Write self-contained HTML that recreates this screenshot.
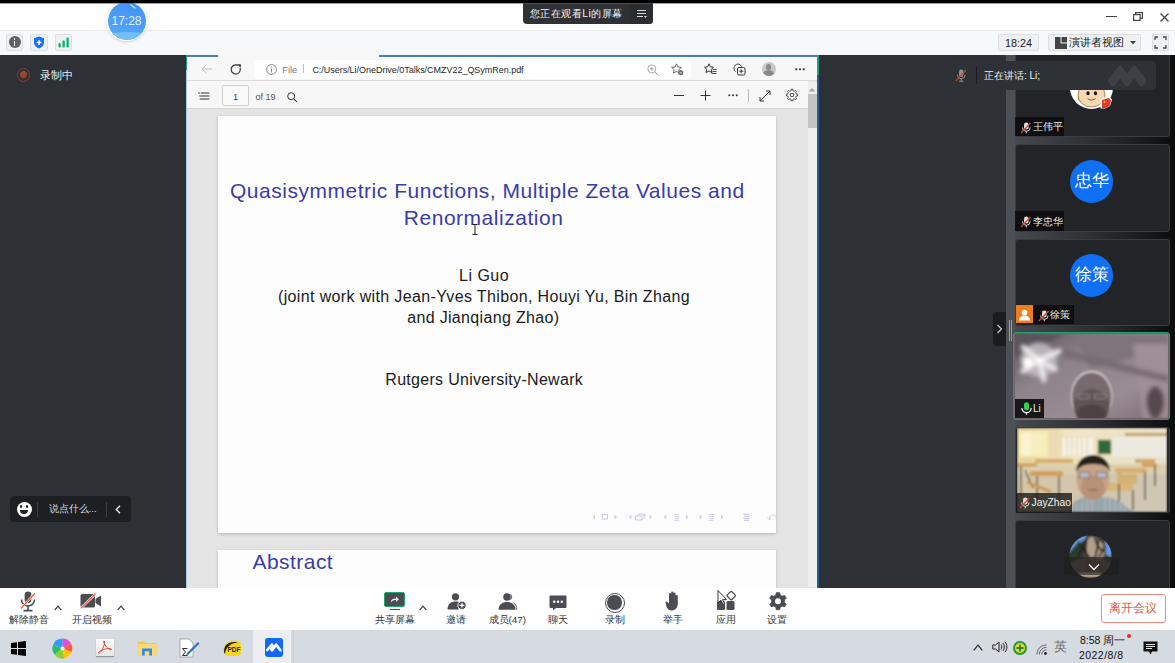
<!DOCTYPE html>
<html><head><meta charset="utf-8">
<style>
*{margin:0;padding:0;box-sizing:border-box}
html,body{width:1175px;height:663px;overflow:hidden;background:#2d3034;font-family:"Liberation Sans",sans-serif}
.a{position:absolute}
svg{position:absolute;overflow:visible}
#topblack{left:0;top:0;width:1175px;height:3px;background:#000}
#title{left:0;top:3px;width:1175px;height:26.5px;background:#fff}
#tool{left:0;top:29.5px;width:1175px;height:25.5px;background:#f7f8fa;border-top:1px solid #ebecee}
#bottom{left:0;top:587.5px;width:1175px;height:42px;background:#fff}
#task{left:0;top:629.5px;width:1175px;height:33.5px;background:#d6dae1}
.ibox{position:absolute;background:#eef0f2;border:1px solid #dcdee2;border-radius:2px}
.t{position:absolute;white-space:nowrap;line-height:1}
.tile{background:#232427;border:1px solid #3a3c40;border-radius:3px}
.label{background:rgba(14,14,15,.92)}
</style></head><body>
<div class="a" id="title"></div>
<div class="a" id="tool"></div>

<!-- timer circle -->
<div class="a" style="left:106px;top:0px;width:41px;height:41px;border-radius:50%;background:#fff;box-shadow:0 1px 3px rgba(0,0,0,.15)"></div>
<div class="a" style="left:107.5px;top:1.5px;width:38px;height:38px;border-radius:50%;background:linear-gradient(200deg,#3f8ff7,#5aacf6);overflow:hidden">
  <div class="a" style="left:-10px;top:30px;width:60px;height:20px;border-radius:50%;background:#7cc6f8;opacity:.8"></div>
</div>
<div class="t" style="left:111.5px;top:14.5px;font-size:12px;color:#e4efff;letter-spacing:0">17:28</div>
<div class="a" style="left:130px;top:6px;width:6px;height:1px;background:#cfe6ff;transform:rotate(35deg)"></div>

<!-- pill -->
<div class="a" style="left:523px;top:3px;width:130px;height:20.5px;background:#2f3135;border-radius:0 0 4px 4px"></div>
<div class="a" style="left:629px;top:3px;width:24px;height:20.5px;background:#2b2d31;border-radius:0 0 4px 0"></div>
<div class="t" style="left:530px;top:8.8px;font-size:10.4px;letter-spacing:0.45px;color:#f2f2f2">您正在观看Li的屏幕</div>
<svg style="left:636px;top:9px" width="12" height="10" viewBox="0 0 12 10"><path d="M1 1.5h9M1 4.5h9M1 7.5h6" stroke="#ddd" stroke-width="1.2"/><path d="M8 7l3 0-1.5 2z" fill="#ddd"/></svg>

<!-- window controls -->
<div class="a" style="left:1106px;top:16px;width:11px;height:1.2px;background:#444"></div>
<svg style="left:1133px;top:12px" width="10" height="9" viewBox="0 0 10 9"><rect x="0.6" y="2.6" width="6.5" height="5.8" fill="none" stroke="#444" stroke-width="1.2"/><path d="M2.6 2.6V0.6h6.8v5.8H7.1" fill="none" stroke="#444" stroke-width="1.2"/></svg>
<svg style="left:1160px;top:12.5px" width="9" height="9" viewBox="0 0 9 9"><path d="M0.5 0.5l8 8M8.5 0.5l-8 8" stroke="#444" stroke-width="1.3"/></svg>

<!-- toolbar icons left -->
<div class="ibox" style="left:6px;top:34px;width:17px;height:16.5px"></div>
<div class="a" style="left:8.5px;top:36px;width:12px;height:12px;border-radius:50%;background:#5f6165"></div>
<div class="a" style="left:13.7px;top:38px;width:1.8px;height:1.8px;background:#fff;border-radius:1px"></div>
<div class="a" style="left:13.7px;top:40.5px;width:1.8px;height:5px;background:#fff"></div>
<div class="ibox" style="left:30px;top:34px;width:17.5px;height:16.5px"></div>
<svg style="left:33px;top:36px" width="12" height="13" viewBox="0 0 12 13"><path d="M6 0.5L11 2.3V6.5C11 9.5 8.8 11.5 6 12.5 3.2 11.5 1 9.5 1 6.5V2.3Z" fill="#1772f5"/><path d="M6 4.3v4.6M3.7 6.6h4.6" stroke="#fff" stroke-width="1.5"/></svg>
<div class="ibox" style="left:55px;top:34px;width:17px;height:16.5px"></div>
<svg style="left:57px;top:37px" width="13" height="11" viewBox="0 0 13 11"><rect x="1.5" y="6" width="2.3" height="4.5" rx="1" fill="#0bb56a"/><rect x="5.5" y="3.5" width="2.3" height="7" rx="0.8" fill="#0bb56a"/><rect x="9.5" y="0.6" width="2.3" height="9.9" rx="0.8" fill="#0bb56a"/></svg>

<!-- toolbar right -->
<div class="ibox" style="left:998px;top:34.3px;width:40.5px;height:16.4px"></div>
<div class="t" style="left:1005px;top:37.5px;font-size:10.8px;color:#222">18:24</div>
<div class="ibox" style="left:1048.3px;top:34.3px;width:93.2px;height:16.4px"></div>
<svg style="left:1055px;top:36.5px" width="12" height="12" viewBox="0 0 12 12"><path d="M0 0h5.5v6.5H12V12H0z" fill="#444"/><rect x="6.5" y="0" width="5.5" height="5.5" fill="#444"/></svg>
<div class="t" style="left:1069px;top:37px;font-size:10.6px;color:#222">演讲者视图</div>
<svg style="left:1129.5px;top:40.5px" width="6" height="4" viewBox="0 0 6 4"><path d="M0 0h6L3 3.5z" fill="#444"/></svg>
<div class="ibox" style="left:1152.2px;top:34.3px;width:16.5px;height:16.4px"></div>
<svg style="left:1154px;top:36px" width="13" height="13" viewBox="0 0 13 13"><path d="M1 4V1h3M9 1h3v3M12 9v3H9M4 12H1V9" fill="none" stroke="#444" stroke-width="1.3"/></svg>


<!-- recording -->
<div class="a" style="left:16.5px;top:68px;width:13.5px;height:13.5px;border-radius:50%;border:1.3px solid #8a3b30"></div>
<div class="a" style="left:19.7px;top:71.3px;width:7px;height:7px;border-radius:50%;background:#a0402f"></div>
<div class="t" style="left:40px;top:70px;font-size:10.5px;color:#eee">录制中</div>

<!-- PDF window -->
<div class="a" id="pdfwin" style="left:185.8px;top:55px;width:633px;height:532.5px;background:#e4e4e4;overflow:hidden">
  <div class="a" style="left:0;top:0;width:1.6px;height:532.5px;background:#a9cbe6"></div>
  <div class="a" style="left:0;top:0;width:1.6px;height:15px;background:#1b9a8a"></div>
  <div class="a" style="left:631.2px;top:0;width:1.8px;height:532.5px;background:#255d9a"></div>
  <div class="a" style="left:631px;top:0;width:2px;height:20px;background:#1f9c8a"></div>
  <!-- address row -->
  <div class="a" style="left:1.6px;top:0;width:629.4px;height:26.3px;background:#f7f7f7;border-bottom:1px solid #dcdcdc"></div>
  <div class="a" style="left:1.6px;top:0;width:31px;height:1.5px;background:#4a7db5"></div>
  <div class="a" style="left:193px;top:0;width:438px;height:1.5px;background:#4a7db5"></div>
  <div class="a" style="left:68px;top:5px;width:437px;height:19px;background:#fff;border-radius:3px"></div>
  <!-- PDF toolbar row -->
  <div class="a" style="left:1.6px;top:26.3px;width:620.2px;height:27.7px;background:#f7f7f7;border-bottom:1px solid #d6d6d6"></div>
  <div class="a" style="left:36.6px;top:30px;width:26.2px;height:20.7px;background:#fafafa;border:1px solid #cfcfcf;border-radius:2px"></div>
  <!-- scrollbar -->
  <div class="a" style="left:621.8px;top:27.3px;width:9.6px;height:505px;background:#eeeeee"></div>
  <div class="a" style="left:621.8px;top:38.6px;width:9.4px;height:34.5px;background:#c4c4c4"></div>
  <!-- pages -->
  <div class="a" style="left:32.2px;top:60.5px;width:558px;height:417.8px;background:#fdfdfd;box-shadow:0 1px 3px rgba(0,0,0,.22)"></div>
  <div class="a" style="left:32.2px;top:494.5px;width:558px;height:60px;background:#fdfdfd;box-shadow:0 1px 3px rgba(0,0,0,.2)"></div>

  <!-- address icons -->
  <svg style="left:15px;top:8.5px" width="12" height="10" viewBox="0 0 12 10"><path d="M11 5H1.2M5.5 0.8L1.2 5l4.3 4.2" fill="none" stroke="#bdbdbd" stroke-width="1"/></svg>
  <svg style="left:44px;top:9px" width="12" height="11" viewBox="0 0 12 11"><path d="M10.2 4.2A4.6 4.6 0 1 1 8.3 1.6" fill="none" stroke="#333" stroke-width="1.2"/><path d="M7.2 0.2h3.6v3.6z" fill="#333"/></svg>
  <svg style="left:80px;top:8.8px" width="11" height="11" viewBox="0 0 11 11"><circle cx="5.5" cy="5.5" r="4.9" fill="none" stroke="#7a7a7a" stroke-width="0.9"/><path d="M5.5 4.6v3.8" stroke="#7a7a7a" stroke-width="0.9"/><circle cx="5.5" cy="3" r="0.6" fill="#7a7a7a"/></svg>
  <div class="t" style="left:96.5px;top:10.5px;font-size:9.3px;color:#7a7a7a">File</div>
  <div class="a" style="left:117.5px;top:9px;width:1px;height:9px;background:#bdbdbd"></div>
  <div class="t" style="left:126.6px;top:10.5px;font-size:9px;color:#262626;letter-spacing:-0.03px">C:/Users/Li/OneDrive/0Talks/CMZV22_QSymRen.pdf</div>
  <svg style="left:461px;top:8.5px" width="12" height="12" viewBox="0 0 12 12"><circle cx="4.8" cy="4.8" r="4" fill="none" stroke="#9a9a9a" stroke-width="0.9"/><path d="M7.8 7.8l3.5 3.5M4.8 3v3.6M3 4.8h3.6" stroke="#9a9a9a" stroke-width="0.9"/></svg>
  <svg style="left:485px;top:8px" width="13" height="13" viewBox="0 0 13 13"><path d="M5.5 0.8l1.5 3.2 3.4.4-2.5 2.3.7 3.4-3.1-1.7-3 1.7.6-3.4L0.6 4.4 4 4z" fill="none" stroke="#555" stroke-width="0.9"/><circle cx="9.8" cy="9.8" r="2.5" fill="#666"/><path d="M8.6 9.8h2.4" stroke="#fff" stroke-width="0.8"/></svg>
  <svg style="left:518px;top:8px" width="13" height="12" viewBox="0 0 13 12"><path d="M5 0.8l1.4 3 3.2.4-2.4 2.2.7 3.2-2.9-1.6-2.9 1.6.7-3.2L0.5 4.2 3.7 3.8z" fill="none" stroke="#333" stroke-width="1"/><path d="M8.5 6.5h4M8.5 8.5h4M7.5 10.5h5" stroke="#333" stroke-width="0.9"/></svg>
  <svg style="left:547px;top:8px" width="13" height="13" viewBox="0 0 13 13"><path d="M2.5 8.5C1 7.5 0.6 5 1.4 3.4 2.2 1.6 4 .8 5.8 1.2 7.6 1.6 8.2 3 8.5 4" fill="none" stroke="#333" stroke-width="1"/><rect x="4.5" y="4.5" width="7.5" height="7.5" rx="1.5" fill="none" stroke="#333" stroke-width="1"/><path d="M8.2 6.3v4M6.3 8.2h4" stroke="#333" stroke-width="1"/></svg>
  <div class="a" style="left:576px;top:6.8px;width:14px;height:14px;border-radius:50%;background:#c9c9c9;overflow:hidden">
    <div class="a" style="left:4.3px;top:2.5px;width:5.4px;height:5.4px;border-radius:50%;background:#8a8a8a"></div>
    <div class="a" style="left:1.5px;top:8.6px;width:11px;height:8px;border-radius:50%;background:#8a8a8a"></div>
  </div>
  <svg style="left:609px;top:13px" width="10" height="3" viewBox="0 0 10 3"><circle cx="1.3" cy="1.3" r="1.1" fill="#333"/><circle cx="5" cy="1.3" r="1.1" fill="#333"/><circle cx="8.7" cy="1.3" r="1.1" fill="#333"/></svg>
  <!-- pdf toolbar icons -->
  <svg style="left:12.5px;top:37px" width="12" height="8" viewBox="0 0 12 8"><circle cx="1" cy="1" r="0.8" fill="#333"/><path d="M2.8 1h8.5M1 4h10.3M1.5 7h9.8" stroke="#333" stroke-width="1"/><path d="M1 4h1.2M1 7h1.2" stroke="#fff" stroke-width="0.6"/></svg>
  <div class="t" style="left:47.5px;top:38px;font-size:8.5px;color:#333">1</div>
  <div class="t" style="left:69.8px;top:37.8px;font-size:9px;color:#555">of 19</div>
  <svg style="left:101px;top:36.5px" width="11" height="10" viewBox="0 0 11 10"><circle cx="4.2" cy="4.2" r="3.5" fill="none" stroke="#333" stroke-width="1"/><path d="M6.8 6.8l3 3" stroke="#333" stroke-width="1.1"/></svg>
  <div class="a" style="left:488.5px;top:40px;width:10px;height:1px;background:#333"></div>
  <svg style="left:514px;top:35px" width="11" height="11" viewBox="0 0 11 11"><path d="M5.5 0.5v10M0.5 5.5h10" stroke="#333" stroke-width="1"/></svg>
  <svg style="left:542px;top:39px" width="10" height="3" viewBox="0 0 10 3"><circle cx="1.3" cy="1.3" r="1" fill="#333"/><circle cx="5" cy="1.3" r="1" fill="#333"/><circle cx="8.7" cy="1.3" r="1" fill="#333"/></svg>
  <div class="a" style="left:562.2px;top:34px;width:1px;height:13px;background:#bbb"></div>
  <svg style="left:573px;top:34.5px" width="12" height="12" viewBox="0 0 12 12"><path d="M1 11L11 1M7 1h4v4M1 7v4h4" fill="none" stroke="#333" stroke-width="1"/></svg>
  <svg style="left:600px;top:34px" width="12" height="12" viewBox="0 0 12 12"><path d="M4.32 1.93 L5.12 1.59 L5.09 0.27 L6.91 0.27 L6.88 1.59 L7.68 1.93 L8.50 2.26 L9.41 1.31 L10.69 2.59 L9.74 3.50 L10.07 4.32 L10.41 5.12 L11.73 5.09 L11.73 6.91 L10.41 6.88 L10.07 7.68 L9.74 8.50 L10.69 9.41 L9.41 10.69 L8.50 9.74 L7.68 10.07 L6.88 10.41 L6.91 11.73 L5.09 11.73 L5.12 10.41 L4.32 10.07 L3.50 9.74 L2.59 10.69 L1.31 9.41 L2.26 8.50 L1.93 7.68 L1.59 6.88 L0.27 6.91 L0.27 5.09 L1.59 5.12 L1.93 4.32 L2.26 3.50 L1.31 2.59 L2.59 1.31 L3.50 2.26Z" fill="none" stroke="#333" stroke-width="0.85" stroke-linejoin="round"/><circle cx="6" cy="6" r="1.8" fill="none" stroke="#333" stroke-width="0.85"/></svg>
  <svg style="left:622.5px;top:32px" width="8" height="5" viewBox="0 0 8 5"><path d="M0.5 4.5L4 1l3.5 3.5z" fill="#a5a5a5"/></svg>
  <!-- page 1 content -->
  <div class="t" style="left:44.2px;top:124.5px;font-size:21px;color:#3a3ca8;letter-spacing:0.52px">Quasisymmetric Functions, Multiple Zeta Values and</div>
  <div class="t" style="left:218px;top:151.7px;font-size:21px;color:#3a3ca8;letter-spacing:0.52px">Renormalization</div>
  <div class="t" style="left:273.2px;top:213.3px;font-size:16px;color:#1a1a1a;letter-spacing:0.5px">Li Guo</div>
  <div class="t" style="left:92.2px;top:234.1px;font-size:16px;color:#1a1a1a;letter-spacing:0.36px">(joint work with Jean-Yves Thibon, Houyi Yu, Bin Zhang</div>
  <div class="t" style="left:221.4px;top:254.8px;font-size:16px;color:#1a1a1a;letter-spacing:0.33px">and Jianqiang Zhao)</div>
  <div class="t" style="left:199.5px;top:317.3px;font-size:16px;color:#1a1a1a;letter-spacing:0.3px">Rutgers University-Newark</div>
  <div class="t" style="left:66.7px;top:496px;font-size:21px;color:#3a3ca8;letter-spacing:0.45px">Abstract</div>
  <!-- nav symbols -->
  <svg style="left:406.2px;top:455.5px" width="190" height="12" viewBox="0 0 190 12"><path d="M3.0000000000000453 3.8v4.4L0.7000000000000455 6z" fill="#c9c9e2"/><path d="M39.3 3.8v4.4L37 6z" fill="#c9c9e2"/><path d="M74.3 3.8v4.4L72 6z" fill="#c9c9e2"/><path d="M109.3 3.8v4.4L107 6z" fill="#c9c9e2"/><path d="M22.5 3.8v4.4L24.8 6z" fill="#c9c9e2"/><path d="M57.5 3.8v4.4L59.8 6z" fill="#c9c9e2"/><path d="M94 3.8v4.4L96.3 6z" fill="#c9c9e2"/><path d="M129 3.8v4.4L131.3 6z" fill="#c9c9e2"/><rect x="10.3" y="3.6" width="5.2" height="4.4" fill="none" stroke="#c4c4e0" stroke-width="0.9"/><path d="M43.5 5h6.5v4h-6.5z M45 5l1.5-1.8h6.2L51.2 5 M50 9l2.7-2.5V3.2" fill="none" stroke="#c4c4e0" stroke-width="0.9"/><path d="M82 3.5h5M82 5.5h5M83 7.5h4M82 9.3h5" stroke="#c9c9e2" stroke-width="0.9"/><path d="M116.5 3.5h5M116.5 5.5h5M117.5 7.5h4M116.5 9.3h5" stroke="#c9c9e2" stroke-width="0.9"/><path d="M151.5 3.3h6M152.5 5.3h5M151.5 7.3h6M152 9.3h5" stroke="#b9b9da" stroke-width="0.9"/><path d="M177 8.5c0-3 2-4.5 4-4.5s3 1 3 3M177 8.5l-1.5-2M177 8.5l2-1.5" fill="none" stroke="#c9c9e2" stroke-width="0.9"/></svg>
  <!-- text cursor -->
  <svg style="left:286px;top:169px" width="6" height="11" viewBox="0 0 6 11"><path d="M0.5 0.5h5M3 0.5v10M0.5 10.5h5" stroke="#222" stroke-width="1"/></svg>
</div>


<!-- right column -->
<div class="a" style="left:1006px;top:55px;width:169px;height:532.5px;background:linear-gradient(90deg,#4d5054 0px,#46494d 10px,#2c2e31 90px,#141517 150px,#0c0c0d 169px);overflow:hidden">
  <div class="a" style="left:0;top:0;width:8.5px;height:532.5px;background:#4c4f53"></div>
  <!-- tile 1 -->
  <div class="a tile" style="left:8.5px;top:-12px;width:155.5px;height:93.5px"></div>
  <svg style="left:63.5px;top:11px" width="43" height="43" viewBox="0 0 43 43">
    <defs><clipPath id="c1"><circle cx="21.5" cy="21.5" r="21.5"/></clipPath></defs>
    <g clip-path="url(#c1)">
      <rect width="43" height="43" fill="#fff"/>
      <ellipse cx="10.5" cy="32" rx="3" ry="3.5" fill="#f0b36e"/>
      <ellipse cx="21.5" cy="29" rx="13.5" ry="12" fill="#f6d9ae" stroke="#6b4a2c" stroke-width="0.6"/>
      <path d="M6 24c2-10 8-14 15.5-14S35 14 37 24c-3-4-8-6-15.5-6S9 20 6 24z" fill="#e59a4a"/>
      <ellipse cx="18" cy="27.3" rx="1.6" ry="2" fill="#151515"/>
      <ellipse cx="25.5" cy="27.3" rx="1.6" ry="2" fill="#151515"/>
      <path d="M17.5 32.5c2 2 6 2 8 0" fill="none" stroke="#7a4a2a" stroke-width="0.9"/>
    </g>
    <path d="M30.5 32.5l8.5-2.5 3 3.5-2 6.5-5 2.5h-4.5z" fill="#fff"/>
    <path d="M32 34l7-2 2 2.5-1.5 5.5-4 2H32z" fill="#e3362a"/>
    <circle cx="34.5" cy="36" r="0.9" fill="#f7d23c"/>
  </svg>
  <div class="a label" style="left:9px;top:61.8px;width:49px;height:19.2px"></div>
  <svg style="left:14px;top:66.5px" width="12" height="12" viewBox="0 0 12 12"><rect x="4" y="0.5" width="4.6" height="7" rx="2.3" fill="#ddd"/><path d="M2.5 5.5a3.8 3.8 0 0 0 7.6 0M6.3 9.3v2" stroke="#ddd" stroke-width="1" fill="none"/><path d="M1 11L10.5 1" stroke="#d9452e" stroke-width="1.2"/></svg>
  <div class="t" style="left:26.5px;top:67.3px;font-size:9.8px;color:#eee">王伟平</div>
  <!-- tile 2 -->
  <div class="a tile" style="left:8.5px;top:89px;width:155.5px;height:87.5px"></div>
  <div class="a" style="left:63.6px;top:104.5px;width:43px;height:43px;border-radius:50%;background:#0f6ff5"></div>
  <div class="t" style="left:68.5px;top:117px;font-size:16.5px;color:#fff">忠华</div>
  <div class="a label" style="left:9px;top:156px;width:49px;height:19.5px"></div>
  <svg style="left:14px;top:160.5px" width="12" height="12" viewBox="0 0 12 12"><rect x="4" y="0.5" width="4.6" height="7" rx="2.3" fill="#ddd"/><path d="M2.5 5.5a3.8 3.8 0 0 0 7.6 0M6.3 9.3v2" stroke="#ddd" stroke-width="1" fill="none"/><path d="M1 11L10.5 1" stroke="#d9452e" stroke-width="1.2"/></svg>
  <div class="t" style="left:26.5px;top:161.5px;font-size:9.8px;color:#eee">李忠华</div>
  <!-- tile 3 -->
  <div class="a tile" style="left:8.5px;top:183.5px;width:155.5px;height:87.5px"></div>
  <div class="a" style="left:63.8px;top:198.5px;width:43px;height:43px;border-radius:50%;background:#0f6ff5"></div>
  <div class="t" style="left:68.8px;top:211px;font-size:16.5px;color:#fff">徐策</div>
  <div class="a" style="left:9.5px;top:250.3px;width:17.5px;height:18px;background:#f07d1b"></div>
  <svg style="left:11.5px;top:253px" width="13" height="13" viewBox="0 0 13 13"><circle cx="6.5" cy="4.5" r="2.8" fill="#fff"/><path d="M1 12.5c0-3 2.5-5 5.5-5s5.5 2 5.5 5z" fill="#fff"/></svg>
  <div class="a label" style="left:27px;top:250.3px;width:41px;height:19px"></div>
  <svg style="left:32px;top:254.5px" width="12" height="12" viewBox="0 0 12 12"><rect x="4" y="0.5" width="4.6" height="7" rx="2.3" fill="#ddd"/><path d="M2.5 5.5a3.8 3.8 0 0 0 7.6 0M6.3 9.3v2" stroke="#ddd" stroke-width="1" fill="none"/><path d="M1 11L10.5 1" stroke="#d9452e" stroke-width="1.2"/></svg>
  <div class="t" style="left:44px;top:255.3px;font-size:9.8px;color:#eee">徐策</div>
  <!-- tile 4 Li -->
  <div class="a" style="left:7.2px;top:277px;width:156.5px;height:87.5px;border:1.6px solid #1e9d6b;border-radius:3px;background:#6e666b"></div>
  <svg style="left:8.8px;top:278.6px;overflow:hidden" width="153.3" height="84.3" viewBox="0 0 153 84">
    <defs><filter id="bl2" x="-10%" y="-10%" width="120%" height="120%"><feGaussianBlur stdDeviation="2.2"/></filter>
    <filter id="bl3" x="-30%" y="-30%" width="160%" height="160%"><feGaussianBlur stdDeviation="2.2"/></filter><filter id="bl5" x="-20%" y="-20%" width="140%" height="140%"><feGaussianBlur stdDeviation="0.9"/></filter>
    <linearGradient id="lig" x1="0" y1="0" x2="1" y2="1"><stop offset="0" stop-color="#5d565c"/><stop offset=".35" stop-color="#8d8389"/><stop offset=".7" stop-color="#9a8c93"/><stop offset="1" stop-color="#7b6d73"/></linearGradient></defs>
    <rect x="0" y="0" width="153" height="84" fill="url(#lig)"/>
    <g filter="url(#bl2)">
      <path d="M0 0h50L0 25z" fill="#5a535a"/>
      <path d="M60 0h93v14L75 35z" fill="#7e747a"/>
      <path d="M118 10h35v74h-25z" fill="#a08f97"/>
      <path d="M45 18L153 45" stroke="#776c72" stroke-width="7"/>
      <ellipse cx="140" cy="68" rx="9" ry="16" fill="#55494e"/>
      <ellipse cx="24" cy="26" rx="18" ry="17" fill="#b9b3b8"/>
    </g>
    <g filter="url(#bl3)">
      <path d="M24 26L8 13M24 26L44 17M24 26L29 46M24 26L8 37M24 26L40 35" stroke="#eceaec" stroke-width="5" stroke-linecap="round"/>
      <circle cx="13" cy="28" r="5" fill="#fff"/>
      <circle cx="24" cy="26" r="3.5" fill="#fff"/>
    </g>
    <g filter="url(#bl5)">
      <ellipse cx="76.5" cy="62" rx="21" ry="26" fill="#c4bec1"/>
      <ellipse cx="76.5" cy="63" rx="19.5" ry="24.5" fill="#776b6e"/>
      <ellipse cx="76.5" cy="72" rx="18" ry="17" fill="#605456"/>
      <ellipse cx="76.5" cy="80" rx="15" ry="10" fill="#4f4345"/>
      <path d="M63 60h11v4.5h-11zM79.5 60h11v4.5h-11z" fill="none" stroke="#9e9497" stroke-width="0.8"/>
    </g>
  </svg>
  <div class="a label" style="left:8.8px;top:343.8px;width:29px;height:19px"></div>
  <svg style="left:13.5px;top:346.5px" width="13" height="13" viewBox="0 0 13 13"><rect x="4" y="0.3" width="5" height="8" rx="2.5" fill="#2fd24f"/><path d="M1.8 6a4.7 4.7 0 0 0 9.4 0M6.5 10.7v2" stroke="#eee" stroke-width="1.3" fill="none"/></svg>
  <div class="t" style="left:27px;top:349px;font-size:10px;color:#eee">Li</div>
  <!-- tile 5 JayZhao -->
  <div class="a tile" style="left:8.5px;top:371.5px;width:155.5px;height:86.5px;overflow:hidden;background:#2a2b2e"></div>
  <svg style="left:10.5px;top:373px;overflow:hidden" width="150" height="84" viewBox="0 0 150 84">
    <defs><filter id="bl" x="-5%" y="-5%" width="110%" height="110%"><feGaussianBlur stdDeviation="0.9"/></filter>
    <linearGradient id="wall" x1="0" y1="0" x2="1" y2="0"><stop offset="0" stop-color="#e9d39c"/><stop offset=".45" stop-color="#efe3c2"/><stop offset="1" stop-color="#e6e0cc"/></linearGradient>
    <linearGradient id="floor" x1="0" y1="0" x2="1" y2="0"><stop offset="0" stop-color="#d6c6a6"/><stop offset="1" stop-color="#cfc6b6"/></linearGradient></defs>
    <g filter="url(#bl)">
    <rect x="0" y="0" width="150" height="84" fill="url(#wall)"/>
    <rect x="0" y="36" width="150" height="48" fill="url(#floor)"/>
    <path d="M0 36h150v10H0z" fill="#dccfae"/>
    <rect x="1" y="3" width="30" height="26" fill="#f7eab6"/>
    <rect x="4" y="5" width="11" height="22" fill="#fbf3cf"/><rect x="17" y="6" width="11" height="21" fill="#f6eebf"/>
    <rect x="0" y="3" width="1.5" height="26" fill="#d9b878"/>
    <rect x="46" y="2" width="32" height="6" fill="#efe6cb"/>
    <rect x="45" y="10" width="31" height="18" fill="#f6f1e2"/>
    <path d="M50 10v18M55 10v18M60 10v18M65 10v18M70 10v18" stroke="#d8cfb0" stroke-width="1"/>
    <rect x="81" y="12" width="13" height="14" fill="#2f6a3c" stroke="#b89a66" stroke-width="0.8"/>
    <rect x="95" y="9" width="55" height="20" fill="#ece9df"/>
    <rect x="108" y="5" width="42" height="3" fill="#c9a06a"/>
    <!-- desks left -->
    <path d="M0 35h20v4H0z" fill="#d3a868"/>
    <path d="M13 43h33v5H13z" fill="#cf9f5c"/>
    <path d="M18 31h18v4H18z" fill="#d7ad6c"/>
    <path d="M36 31h20v4H36z" fill="#d6ac6b"/>
    <path d="M8 42l8 18M20 48v28M42 48v26M4 38v30" stroke="#4e4033" stroke-width="1.3"/>
    <path d="M10 54l24 10" stroke="#c99a5a" stroke-width="3"/>
    <!-- desks right -->
    <path d="M98 40h32v5H98z" fill="#d8b070"/>
    <path d="M118 31h20v4h-20z" fill="#d4a968"/>
    <path d="M125 35h15v4h-15z" fill="#cfa260"/>
    <path d="M88 55h28v8H88z" fill="#d9b67a"/>
    <path d="M102 45v30M128 44v28M138 38v20M116 62v20" stroke="#4e4033" stroke-width="1.3"/>
    <path d="M100 46h20v10h-20z" fill="#d6b176"/>
    <!-- man -->
    <path d="M55 84V78c0-5 8-9 18-9h10c12 0 20 3 24 8l10 7z" fill="#98a5ab"/>
    <path d="M60 76v8M65 73v11M70 71v13M75 70v14M88 70v14M93 71v13M98 72v12M103 74v10M108 77v7" stroke="#c2cacd" stroke-width="0.8"/>
    <ellipse cx="76" cy="51" rx="16.5" ry="21" fill="#c7a487"/>
    <ellipse cx="76" cy="60" rx="12" ry="12" fill="#b89278"/>
    <path d="M59 45c0-12 8-18 17-18s17 6 17 17c-2-5-6-8-17-8s-15 4-17 9z" fill="#27211d"/>
    <path d="M62 44h11v6h-11zM79 44h11v6h-11z" fill="none" stroke="#7b7f86" stroke-width="0.9"/>
    <rect x="64" y="45.5" width="7" height="3" fill="#a9c3e6"/><rect x="81" y="45.5" width="7" height="3" fill="#a9c3e6"/>
    <path d="M71 62h10" stroke="#8a6550" stroke-width="1.2"/>
    </g>
  </svg>
  <div class="a label" style="left:9.8px;top:438px;width:56px;height:19.5px;background:rgba(20,20,20,.78)"></div>
  <svg style="left:13px;top:441.5px" width="12" height="12" viewBox="0 0 12 12"><rect x="4" y="0.5" width="4.6" height="7" rx="2.3" fill="#ddd"/><path d="M2.5 5.5a3.8 3.8 0 0 0 7.6 0M6.3 9.3v2" stroke="#ddd" stroke-width="1" fill="none"/><path d="M1 11L10.5 1" stroke="#d9452e" stroke-width="1.2"/></svg>
  <div class="t" style="left:25.5px;top:442.5px;font-size:10.3px;color:#f0f0f0">JayZhao</div>
  <!-- tile 6 -->
  <div class="a tile" style="left:8.5px;top:465px;width:155.5px;height:90px"></div>
  <svg style="left:63px;top:480.3px" width="43" height="43" viewBox="0 0 43 43">
    <defs><clipPath id="cc"><circle cx="21.5" cy="21.5" r="21.3"/></clipPath><filter id="bl4"><feGaussianBlur stdDeviation="0.8"/></filter></defs>
    <g clip-path="url(#cc)"><g filter="url(#bl4)">
      <rect width="43" height="43" fill="#3c3a36"/>
      <path d="M0 0h18L6 26H0z" fill="#6a9ad8"/>
      <path d="M0 18l10-12 6 4-6 20H0z" fill="#2f3a2c"/>
      <path d="M36 6h7v16l-6-2z" fill="#6c9ad8"/>
      <path d="M22 2c6 0 12 4 13 12s-2 10-6 10h-9c-3 0-4-4-4-10s2-12 6-12z" fill="#b4a08a"/>
      <path d="M19 1c-3 8-3 16 0 24M26 3c1 6 4 10 8 14M12 10l8 12M30 4l-4 20M36 12l-6 10M15 5l-6 20" stroke="#26221f" stroke-width="2" fill="none"/>
      <path d="M0 30c6-6 14-8 22-8s16 2 21 8v13H0z" fill="#5d5044"/>
      <path d="M20 26l-3 17M30 28l4 15" stroke="#3a322c" stroke-width="1.2"/>
      <rect x="10" y="38" width="22" height="5" fill="#b39c7e"/>
    </g></g>
  </svg>
  <div class="a" style="left:57.8px;top:502.3px;width:55.2px;height:18px;background:rgba(28,29,31,.55)"></div>
  <svg style="left:82px;top:507.5px" width="12" height="8" viewBox="0 0 12 8"><path d="M1 1.5l5 5 5-5" fill="none" stroke="#eee" stroke-width="1.4"/></svg>
</div>
<!-- expand handle -->
<div class="a" style="left:992.8px;top:311.7px;width:13px;height:34px;background:#1b1c1e;border-radius:4px 0 0 4px"></div>
<svg style="left:996px;top:324px" width="7" height="10" viewBox="0 0 7 10"><path d="M1.5 1l4 4-4 4" fill="none" stroke="#ccc" stroke-width="1.2"/></svg>
<div class="a" style="left:1008.5px;top:319.5px;width:1px;height:21px;background:#9a9ca0"></div>
<div class="a" style="left:1010.8px;top:319.5px;width:1px;height:21px;background:#9a9ca0"></div>
<!-- speaking bar -->
<div class="a" style="left:946px;top:60.5px;width:210px;height:29.8px;background:#2e3135;border-radius:4px"></div>
<svg style="left:954.5px;top:68.5px" width="12" height="13" viewBox="0 0 12 13"><rect x="4" y="0.5" width="4.4" height="7.5" rx="2.2" fill="#8e9195"/><path d="M2.3 5.8a3.9 3.9 0 0 0 7.8 0M6.2 9.7v2.5M4 12.2h4.4" stroke="#8e9195" stroke-width="1" fill="none"/><path d="M0.8 12L11 1" stroke="#c8412d" stroke-width="1.2"/></svg>
<div class="a" style="left:975.8px;top:67px;width:1px;height:17px;background:#1a1b1d"></div>
<div class="t" style="left:984px;top:71px;font-size:10px;color:#eee">正在讲话: Li;</div>
<svg style="left:1107px;top:65px" width="40" height="22" viewBox="0 0 40 22"><path d="M11 1.5c1-1.3 2.8-1.3 3.8 0L20 8.5 25.3 1.5c1-1.3 2.8-1.3 3.8 0l9.4 12.3c.9 1.2.9 2.8 0 4l-2 2.7c-1 1.3-2.8 1.3-3.8 0L27.2 13.6 22 20.5c-1 1.3-2.8 1.3-3.8 0L13 13.6 7.8 20.5c-1 1.3-2.8 1.3-3.8 0l-2-2.7c-.9-1.2-.9-2.8 0-4z" fill="#3d4044"/></svg>

<div class="a" id="bottom"></div>
<div class="a" id="task"></div>

<!-- bottom toolbar content -->
<svg style="left:20px;top:591px" width="16" height="21" viewBox="0 0 16 21"><rect x="4.6" y="0.5" width="6.8" height="11.5" rx="3.4" fill="#4b4d52"/><path d="M1.5 8.5a6.5 6.5 0 0 0 13 0" fill="none" stroke="#4b4d52" stroke-width="1.6"/><path d="M8 15v4M3.5 19.6h9" stroke="#4b4d52" stroke-width="1.6"/><path d="M0.8 17.5L14.8 2.5" stroke="#fff" stroke-width="2.2"/><path d="M0.8 17.5L14.8 2.5" stroke="#f2553f" stroke-width="1.2"/></svg>
<div class="t" style="left:9px;top:614.8px;font-size:9.9px;color:#333">解除静音</div>
<svg style="left:53.5px;top:605px" width="8" height="6" viewBox="0 0 8 6"><path d="M0.7 5L4 1.2 7.3 5" fill="none" stroke="#444" stroke-width="1.2"/></svg>
<svg style="left:80px;top:593px" width="22" height="16" viewBox="0 0 22 16"><rect x="0.5" y="1" width="14.5" height="13.5" rx="1.5" fill="#4b4d52"/><path d="M15.5 6l5.5-3.5v11L15.5 10z" fill="#4b4d52"/><path d="M1 15.2L15.5 0.8" stroke="#fff" stroke-width="2.4"/><path d="M1 15.2L15.5 0.8" stroke="#f2553f" stroke-width="1.2"/></svg>
<div class="t" style="left:71.5px;top:614.8px;font-size:9.9px;color:#333">开启视频</div>
<svg style="left:117px;top:605px" width="8" height="6" viewBox="0 0 8 6"><path d="M0.7 5L4 1.2 7.3 5" fill="none" stroke="#444" stroke-width="1.2"/></svg>

<div class="a" style="left:383.8px;top:592px;width:21px;height:15px;background:#4b4d52;border:1.6px solid #1aa86d;border-radius:2px"></div>
<svg style="left:390px;top:595.5px" width="9" height="7" viewBox="0 0 9 7"><path d="M1 6.5C1 3.5 3 2.5 6 2.5V0.5L8.8 3.3 6 6V4C3.8 4 2 4.5 1 6.5z" fill="#fff"/></svg>
<div class="a" style="left:389.5px;top:608.8px;width:10px;height:1.5px;background:#4b4d52"></div>
<div class="t" style="left:375px;top:614.8px;font-size:9.9px;color:#333">共享屏幕</div>
<svg style="left:419.3px;top:605px" width="8" height="6" viewBox="0 0 8 6"><path d="M0.7 5L4 1.2 7.3 5" fill="none" stroke="#444" stroke-width="1.2"/></svg>

<svg style="left:446.5px;top:593px" width="20" height="17" viewBox="0 0 20 17"><circle cx="8.5" cy="3.8" r="3.6" fill="#4b4d52"/><path d="M0.5 16.5C0.5 11 4 8.5 8.5 8.5c2.2 0 3.3.5 4.3 1.2A5.2 5.2 0 0 0 12 16.5z" fill="#4b4d52"/><circle cx="15" cy="12.3" r="4.2" fill="#4b4d52" stroke="#fff" stroke-width="1"/><path d="M15 10v4.6M12.7 12.3h4.6" stroke="#fff" stroke-width="1.3"/></svg>
<div class="t" style="left:446px;top:614.8px;font-size:9.9px;color:#333">邀请</div>

<svg style="left:497.5px;top:593px" width="20" height="17" viewBox="0 0 20 17"><circle cx="9" cy="4" r="3.8" fill="#4b4d52"/><path d="M12.5 1.2A3.8 3.8 0 0 1 12.5 6.8" fill="none" stroke="#4b4d52" stroke-width="0.9"/><path d="M0.5 16.8C0.5 11.5 4.5 9 9 9s8.5 2.5 8.5 7.8z" fill="#4b4d52"/><path d="M15.5 9.8c2 1.2 3.3 3.5 3.3 7" fill="none" stroke="#4b4d52" stroke-width="0.9"/></svg>
<div class="t" style="left:488.5px;top:614.8px;font-size:9.9px;color:#333">成员(47)</div>

<svg style="left:548.5px;top:594.5px" width="18" height="16" viewBox="0 0 18 16"><path d="M1.5 0.5h15a1 1 0 0 1 1 1v10.5a1 1 0 0 1-1 1H7L4 15.5V13H1.5a1 1 0 0 1-1-1V1.5a1 1 0 0 1 1-1z" fill="#4b4d52"/><circle cx="5.2" cy="6.8" r="1.2" fill="#fff"/><circle cx="9" cy="6.8" r="1.2" fill="#fff"/><circle cx="12.8" cy="6.8" r="1.2" fill="#fff"/></svg>
<div class="t" style="left:548px;top:614.8px;font-size:9.9px;color:#333">聊天</div>

<div class="a" style="left:604.5px;top:592.5px;width:20px;height:20px;border-radius:50%;border:1.5px solid #4b4d52"></div>
<div class="a" style="left:607.3px;top:595.3px;width:14.4px;height:14.4px;border-radius:50%;background:#4b4d52"></div>
<div class="t" style="left:605px;top:614.8px;font-size:9.9px;color:#333">录制</div>

<svg style="left:665px;top:591px" width="15" height="20" viewBox="0 0 15 20"><path d="M4 9V3.2a1.1 1.1 0 0 1 2.2 0V8.5V1.6a1.1 1.1 0 0 1 2.2 0V8.5V2.5a1.1 1.1 0 0 1 2.2 0V9V5a1.1 1.1 0 0 1 2.2 0v7.5c0 4-2.5 7-6 7-2.5 0-4-1.3-5.2-3.3L0.7 12.2c-.6-1 .6-2.1 1.5-1.4L4 12.5z" fill="#4b4d52"/></svg>
<div class="t" style="left:663px;top:614.8px;font-size:9.9px;color:#333">举手</div>

<svg style="left:716px;top:590px" width="20" height="21" viewBox="0 0 20 21"><rect x="1" y="11" width="8" height="9" rx="1.5" fill="#4b4d52"/><rect x="10.5" y="11" width="8" height="9" rx="1.5" fill="#4b4d52"/><rect x="12" y="2.3" width="6.5" height="6.5" rx="1" transform="rotate(45 15.2 5.5)" fill="#fff" stroke="#4b4d52" stroke-width="1.3"/><path d="M2 0.5v12.5l3-2.8 2 4.3 1.6-.7-2-4.2h4z" fill="#fff" stroke="#222" stroke-width="0.9" stroke-linejoin="round"/></svg>
<div class="t" style="left:716px;top:614.8px;font-size:9.9px;color:#333">应用</div>

<svg style="left:767.5px;top:592px" width="20" height="20" viewBox="0 0 24 24"><path d="M10 0.8h4l.7 3 2.3 1.3 2.9-1 2 3.5-2.3 2v2.8l2.3 2-2 3.5-2.9-1-2.3 1.3-.7 3h-4l-.7-3-2.3-1.3-2.9 1-2-3.5 2.3-2V9.6l-2.3-2 2-3.5 2.9 1L9.3 3.8z" fill="#4b4d52" stroke="#4b4d52" stroke-width="1" stroke-linejoin="round"/><circle cx="12" cy="11" r="3.6" fill="#fff"/></svg>
<div class="t" style="left:767px;top:614.8px;font-size:9.9px;color:#333">设置</div>

<div class="a" style="left:1100.7px;top:593.6px;width:65.5px;height:29.8px;border:1px solid #f08a80;border-radius:3px;background:#fff"></div>
<div class="t" style="left:1109px;top:602.5px;font-size:11.5px;color:#e6574a">离开会议</div>

<!-- taskbar -->
<svg style="left:11px;top:641px" width="15" height="15" viewBox="0 0 15 15"><path d="M0 2.1L6 1.3V7H0zM7 1.1L15 0V7H7zM0 8h6v5.7L0 12.9zM7 8h8v7L7 13.9z" fill="#000"/></svg>
<svg style="left:52px;top:638px" width="21" height="21" viewBox="0 0 21 21">
<path d="M10.5 10.5L10.5 0.5A10 10 0 0 1 19 5.5z" fill="#e64ad8"/>
<path d="M10.5 10.5L19 5.5A10 10 0 0 1 19.5 14z" fill="#ff5a3c"/>
<path d="M10.5 10.5L19.5 14A10 10 0 0 1 12 20.5z" fill="#ffc40a"/>
<path d="M10.5 10.5L12 20.5A10 10 0 0 1 2.5 16.5z" fill="#8dd12f"/>
<path d="M10.5 10.5L2.5 16.5A10 10 0 0 1 1 7z" fill="#27c06a"/>
<path d="M10.5 10.5L1 7A10 10 0 0 1 10.5 0.5z" fill="#2e9cf5"/>
<circle cx="10.5" cy="10.5" r="2" fill="#fff"/></svg>
<div class="a" style="left:95.5px;top:638.5px;width:18.5px;height:17px;background:linear-gradient(180deg,#fdfdfd,#e5e5e5);box-shadow:0 1px 1px rgba(0,0,0,.3)"></div>
<svg style="left:97px;top:639.5px" width="16" height="15" viewBox="0 0 16 15"><path d="M7 1c1.2 0 .8 3-1 7S2 14 1.5 13c-.6-1 3-3 7-4s6-.3 6 .5-2.5.3-5-2.5S6 1 7 1z" fill="none" stroke="#d23a2a" stroke-width="0.9"/></svg>
<svg style="left:137px;top:640px" width="20" height="16" viewBox="0 0 20 16"><path d="M0.5 1.5h6.5l1.5 1.5h11v12.5H0.5z" fill="#f4c54f"/><path d="M0.5 4h19v11.5H0.5z" fill="#fbd978"/><path d="M5 8.5h10V15.5H12.3v-4.3H7.7v4.3H5z" fill="#2e8ae6"/></svg>
<svg style="left:179px;top:638px" width="21" height="20" viewBox="0 0 21 20"><path d="M1 1h9l4 4v14H1z" fill="#fff" stroke="#999" stroke-width="0.8"/><path d="M8.5 10.5H3.5L6.5 14 3.5 17.5H8.5" fill="none" stroke="#333" stroke-width="1"/><path d="M8 16l2-1" stroke="#e08a2a" stroke-width="1"/><path d="M8 15l11-11 1.5 1.5-11 11-2.3.8z" fill="#2a6fd0"/></svg>
<svg style="left:222px;top:640px" width="20" height="16" viewBox="0 0 20 16"><path d="M3 14C0 12 1 4 7 1.5 12 -0.5 19 1 19 4v9c0 2-3 3-7 3H5c-1 0-1.5-.5-2-2z" fill="#f7d51d"/><path d="M3 14C1 12 2 5 7 3c4-1.5 8-1 9 0C11 2 4 6 3 14z" fill="#222"/><text x="5.5" y="12.3" font-family="Liberation Sans" font-weight="bold" font-size="6.5" fill="#222">PDF</text></svg>
<div class="a" style="left:253.2px;top:630px;width:38px;height:33px;background:#eceef2"></div>
<div class="a" style="left:264.7px;top:638.3px;width:18.5px;height:18.5px;background:#1069f0;border-radius:3px"></div>
<svg style="left:266px;top:643px" width="16" height="9" viewBox="0 0 16 9"><path d="M5 0.8c.5-.6 1.3-.6 1.8 0L8 2.4l1.2-1.6c.5-.6 1.3-.6 1.8 0l4.5 5.8c.4.5.4 1.2 0 1.7-.5.6-1.3.6-1.8 0L10.1 4 7 8.2c-.5.6-1.3.6-1.8 0L3.5 6 2.1 8c-.5.6-1.3.6-1.8 0-.4-.5-.4-1.2 0-1.7z" fill="#fff"/></svg>
<div class="a" style="left:292.5px;top:630px;width:1px;height:33px;background:#c9ccd2"></div>

<svg style="left:972.8px;top:644px" width="10" height="7" viewBox="0 0 10 7"><path d="M0.7 6.3L5 1.2l4.3 5.1" fill="none" stroke="#222" stroke-width="1.1"/></svg>
<svg style="left:991.5px;top:641px" width="15" height="12" viewBox="0 0 15 12"><path d="M0.8 4h2.7L7 1v10L3.5 8H0.8z" fill="none" stroke="#222" stroke-width="1"/><path d="M9 3.5c1 1.3 1 3.7 0 5M11 2c1.8 2 1.8 6 0 8M13 0.8c2.5 2.8 2.5 7.6 0 10.4" fill="none" stroke="#222" stroke-width="1"/></svg>
<div class="a" style="left:1012.7px;top:640.5px;width:14px;height:14px;border-radius:50%;background:#f2d21b;border:2px solid #1c9b46"></div>
<svg style="left:1015.5px;top:643.5px" width="8" height="8" viewBox="0 0 8 8"><path d="M4 0.5v7M0.5 4h7" stroke="#1c8a3c" stroke-width="1.8"/></svg>
<svg style="left:1036px;top:643.5px" width="11" height="11" viewBox="0 0 11 11"><path d="M0.8 10.5A9.7 9.7 0 0 1 10.5 0.8M3.3 10.5A7.2 7.2 0 0 1 10.5 3.3M5.8 10.5A4.7 4.7 0 0 1 10.5 5.8" fill="none" stroke="#555" stroke-width="0.9"/><circle cx="9.5" cy="9.5" r="1.4" fill="#222"/></svg>
<div class="t" style="left:1054px;top:641px;font-size:12.5px;color:#6a6a6a">英</div>
<div class="t" style="left:1080px;top:634.5px;font-size:10.5px;color:#111">8:58 周一</div>
<div class="a" style="left:1127.3px;top:633.7px;width:4px;height:4px;border-radius:50%;background:#f0261a"></div>
<div class="t" style="left:1079px;top:649.5px;font-size:10.5px;letter-spacing:0.45px;color:#111">2022/8/8</div>
<svg style="left:1143px;top:640.8px" width="15" height="14" viewBox="0 0 15 14"><path d="M0.5 0.5h14v10H9L7.5 13.5 6 10.5H0.5z" fill="#111"/><path d="M3 3.5h9M3 5.5h9M3 7.5h6" stroke="#fff" stroke-width="0.9"/></svg>

<!-- chat box -->
<div class="a" style="left:10px;top:496px;width:120.5px;height:26px;background:#1d1f22;border-radius:4px"></div>
<div class="a" style="left:16.5px;top:501.5px;width:15px;height:15px;border-radius:50%;background:#fff"></div>
<div class="a" style="left:20.3px;top:505.3px;width:2px;height:2.5px;border-radius:1px;background:#1d1f22"></div>
<div class="a" style="left:25.7px;top:505.3px;width:2px;height:2.5px;border-radius:1px;background:#1d1f22"></div>
<div class="a" style="left:19.8px;top:510px;width:8.4px;height:3.5px;border-radius:0 0 4.2px 4.2px;background:#1d1f22"></div>
<div class="a" style="left:37px;top:501.5px;width:1px;height:15px;background:#3c3f43"></div>
<div class="t" style="left:48.5px;top:504px;font-size:9.8px;color:#ddd">说点什么...</div>
<div class="a" style="left:106.3px;top:501.5px;width:1px;height:15px;background:#3c3f43"></div>
<svg style="left:115px;top:504.5px" width="6" height="9" viewBox="0 0 6 9"><path d="M5 0.8L1.3 4.5 5 8.2" fill="none" stroke="#eee" stroke-width="1.4"/></svg>

<div class="a" id="topblack"></div>
<div class="a" style="left:0;top:3px;width:1175px;height:1px;background:#3b6aa6;opacity:.6"></div>
</body></html>
